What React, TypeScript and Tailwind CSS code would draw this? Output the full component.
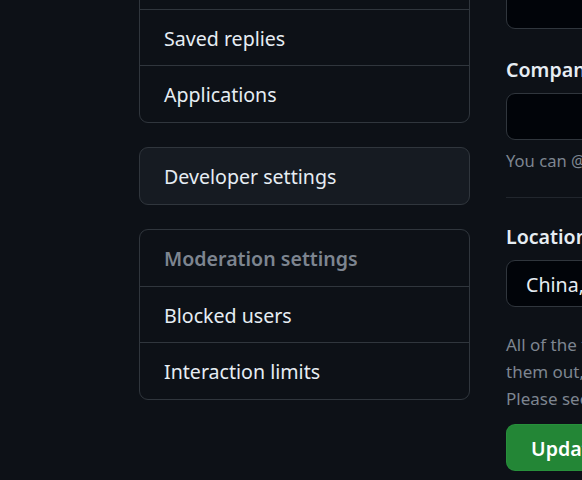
const sans = "font-['Noto_Sans','Segoe_UI','Liberation_Sans',sans-serif]";

function NavRow({ label, muted, last }: { label: string; muted?: boolean; last?: boolean }) {
  return (
    <div
      className={`flex items-center px-[24px] pt-[2px] text-[19.6px] ${
        muted ? "h-[57px] font-semibold text-[#7d8590]" : "h-[56px] text-[#e6edf3]"
      } ${last ? "" : "border-b border-[#30363d]"}`}
    >
      {label}
    </div>
  );
}

function Sidebar() {
  return (
    <nav className="flex w-[331px] shrink-0 flex-col gap-[24px]">
      <div className="-mt-[47px] overflow-hidden rounded-[9px] border border-[#30363d]">
        <NavRow label="Sponsorship log" />
        <NavRow label="Saved replies" />
        <NavRow label="Applications" last />
      </div>
      <div className="overflow-hidden rounded-[9px] border border-[#30363d] bg-[#161b22]">
        <NavRow label="Developer settings" last />
      </div>
      <div className="overflow-hidden rounded-[9px] border border-[#30363d]">
        <NavRow label="Moderation settings" muted />
        <NavRow label="Blocked users" />
        <NavRow label="Interaction limits" last />
      </div>
    </nav>
  );
}

function Input({ value }: { value?: string }) {
  return (
    <div className="flex h-[47px] w-[460px] items-center rounded-[9px] border border-[#30363d] bg-[#010409] px-[19px] pt-[2px] text-[19.6px] text-[#e6edf3]">
      {value}
    </div>
  );
}

function ProfileForm() {
  return (
    <div className="flex min-w-[460px] flex-col">
      <div className="-mt-[18px]">
        <Input />
      </div>
      <label className="mt-[27px] text-[19.6px] font-semibold leading-[28px] text-[#e6edf3]">Company</label>
      <div className="mt-[9px]">
        <Input />
      </div>
      <p className="mt-[8px] whitespace-nowrap text-[16.6px] leading-[26px] text-[#7d8590]">
        You can @mention your company's GitHub organization to link it.
      </p>
      <div className="mt-[23px] h-px w-[460px] bg-[#21262d]" />
      <label className="mt-[25px] text-[19.6px] font-semibold leading-[28px] text-[#e6edf3]">Location</label>
      <div className="mt-[9px]">
        <Input value="China, Beijing" />
      </div>
      <div className="mt-[24px] text-[17px] leading-[27px] text-[#7d8590]">
        <div className="whitespace-nowrap">All of the fields on this page are optional and can be deleted at any time, and by filling</div>
        <div className="whitespace-nowrap">them out, you're giving us consent to share this data wherever your user profile appears.</div>
        <div className="whitespace-nowrap">Please see our privacy statement to learn more about how we use this information.</div>
      </div>
      <div className="mt-[12px]">
        <button className="flex h-[47px] items-center whitespace-nowrap rounded-[9px] border border-[#2ea043]/40 bg-[#238636] px-[24px] pt-[2px] text-[19.6px] font-semibold text-white">
          Update profile
        </button>
      </div>
    </div>
  );
}

export default function App() {
  return (
    <div className={`${sans} h-[480px] w-[582px] overflow-hidden bg-[#0d1117]`}>
      <div className="flex gap-[36px] pl-[139px]">
        <Sidebar />
        <ProfileForm />
      </div>
    </div>
  );
}
